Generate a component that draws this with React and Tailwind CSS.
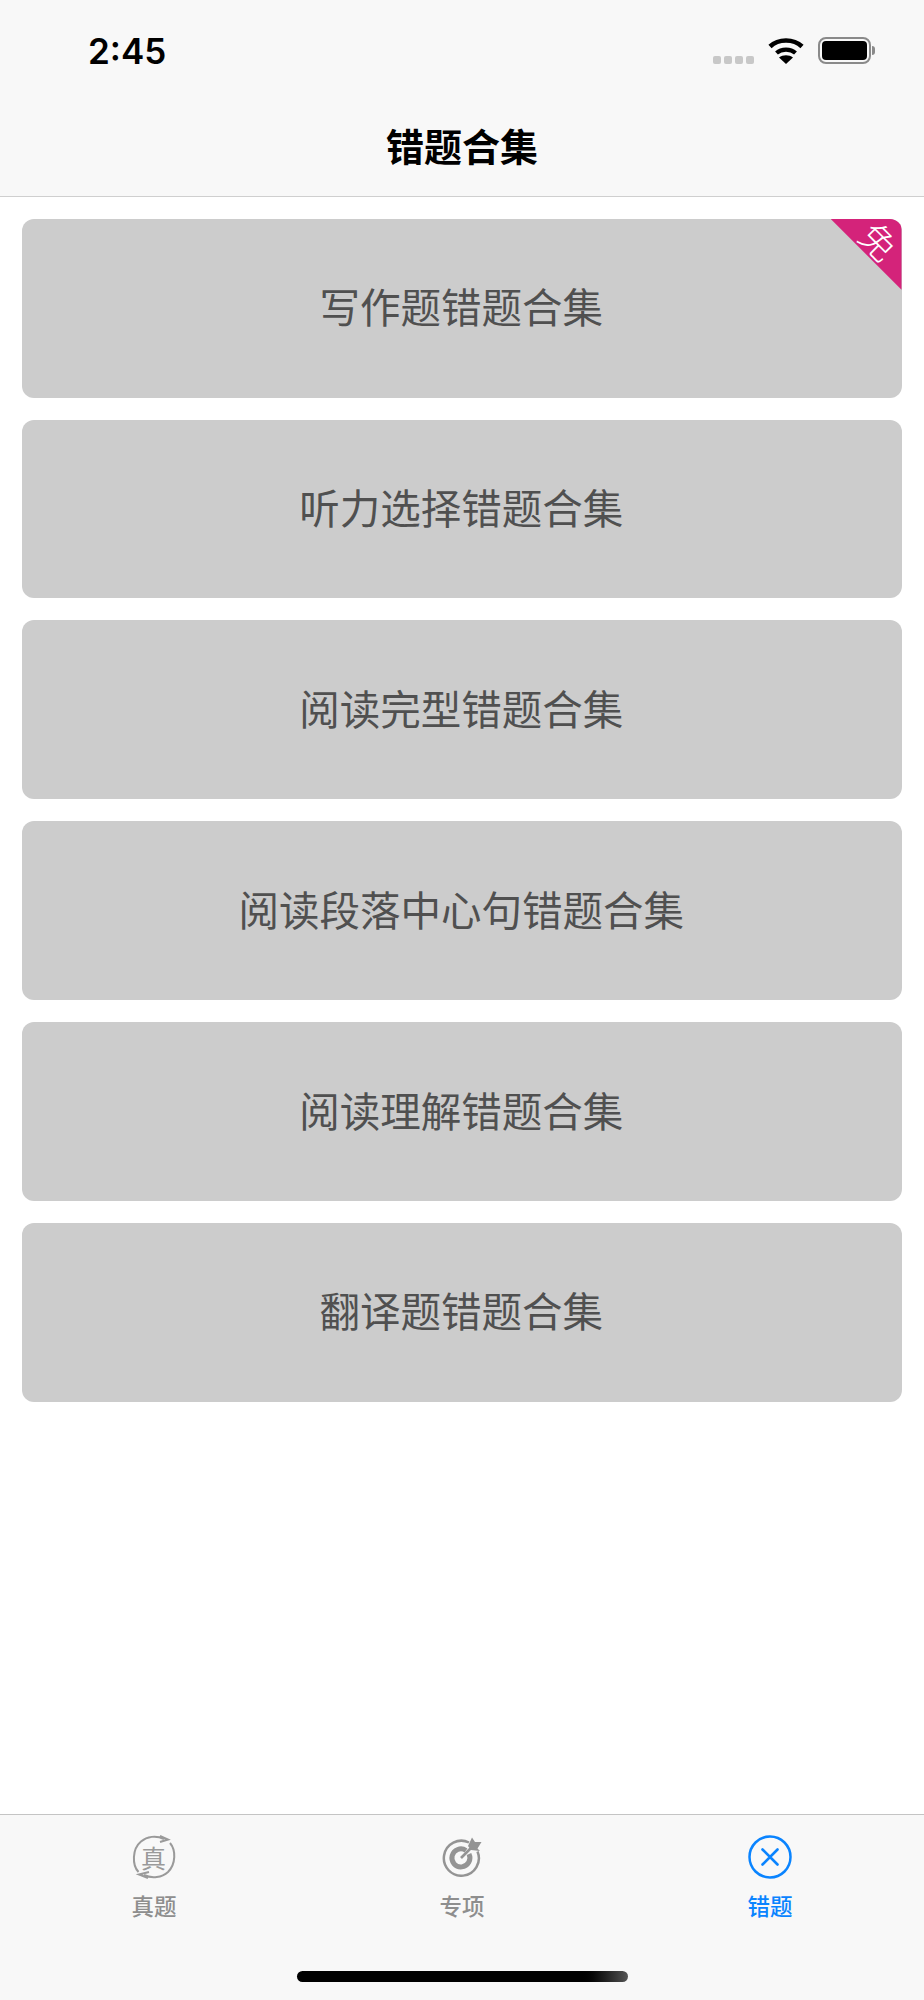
const font = { fontFamily: '"Noto Sans CJK SC", "Liberation Sans", sans-serif' };
const items = ['写作题错题合集', '听力选择错题合集', '阅读完型错题合集', '阅读段落中心句错题合集', '阅读理解错题合集', '翻译题错题合集'];

function Wifi() {
  return (
    <svg width="36" height="27" viewBox="0 0 36 27" fill="none" stroke="#000">
      <path d="M2 9.5C10.5 1.5 25.5 1.5 34 9.5" strokeWidth="4.6" />
      <path d="M8.5 16C13.5 11.5 22.5 11.5 27.5 16" strokeWidth="4.2" />
      <path d="M18 27L11 20.5C15 17.5 21 17.5 25 20.5Z" fill="#000" stroke="none" />
    </svg>
  );
}

function Battery() {
  return (
    <div className="flex items-center">
      <div className="w-[53px] h-[27px] rounded-[8px] border-2 border-[#8a8a8a] p-[2px]">
        <div className="w-full h-full rounded-[4px] bg-black" />
      </div>
      <div className="w-[3px] h-[9px] ml-[1px] rounded-r-full bg-[#8a8a8a]" />
    </div>
  );
}

function ZhenIcon() {
  return (
    <div className="relative w-[44px] h-[44px] flex items-center justify-center">
      <svg className="absolute inset-0" width="44" height="44" viewBox="0 0 44 44" fill="none" stroke="#9a9a9a" strokeWidth="2">
        <path d="M6.5 37C0 30 0 14 9 6.5C15 1.5 24 0 32 4" />
        <path d="M28 1L36 4.5L28 7" />
        <path d="M38 8C44 15 44 29 36 37C30 42.5 20 44 12 40" />
        <path d="M17 37L7 39.5L16 43" />
      </svg>
      <span className="text-[25px] leading-none text-[#9a9a9a] -ml-[1px]">真</span>
    </div>
  );
}

function TargetIcon() {
  return (
    <svg width="40" height="40" viewBox="0 0 40 40" fill="none" stroke="#949494">
      <path d="M27 5.5A17.5 17.5 0 1 0 35.5 14.5" strokeWidth="2.5" />
      <path d="M24 13.5A9 9 0 1 0 27 17" strokeWidth="5" />
      <path d="M19 21L30 10" strokeWidth="2.6" />
      <path d="M26 9L30 0.5L33 5L39.5 5L35.5 11.5L38 14L29 13Z" fill="#949494" stroke="none" />
    </svg>
  );
}

function XIcon() {
  return (
    <svg width="44" height="44" viewBox="0 0 44 44" fill="none" stroke="#0a84ff" strokeLinecap="round">
      <circle cx="22" cy="22" r="20.5" strokeWidth="2.5" />
      <path d="M14.5 14.5L29.5 29.5M29.5 14.5L14.5 29.5" strokeWidth="2.6" />
    </svg>
  );
}

function Tab({ icon, label, active }) {
  return (
    <div className="flex-1 flex flex-col items-center">
      <div className="h-[44px] flex items-center justify-center">{icon}</div>
      <div className={`mt-[10px] text-[22.5px] leading-[33px] font-medium ${active ? 'text-[#0a84ff]' : 'text-[#8e8e8e]'}`}>{label}</div>
    </div>
  );
}

export default function App() {
  return (
    <div style={font} className="w-[924px] h-[2000px] bg-white flex flex-col overflow-hidden">
      <header className="h-[197px] shrink-0 bg-[#f8f8f8] border-b border-[#cfcfcf] flex flex-col">
        <div className="h-[100px] pl-[88px] pr-[49px] pt-[28px] flex justify-between items-start">
          <span style={{ fontFamily: 'Inter, "Liberation Sans", sans-serif' }} className="text-[35px] leading-[46px] font-semibold text-black">2:45</span>
          <div className="flex items-start">
            <div className="flex gap-[3px] mt-[28px] mr-[14px]">
              <div className="w-[8px] h-[8px] rounded-[2px] bg-[#c8c8c8]" />
              <div className="w-[8px] h-[8px] rounded-[2px] bg-[#c8c8c8]" />
              <div className="w-[8px] h-[8px] rounded-[2px] bg-[#c8c8c8]" />
              <div className="w-[8px] h-[8px] rounded-[2px] bg-[#c8c8c8]" />
            </div>
            <div className="mt-[9px] mr-[14px]"><Wifi /></div>
            <div className="mt-[9px]"><Battery /></div>
          </div>
        </div>
        <div className="flex-1 flex items-start justify-center pt-[20px]">
          <h1 className="text-[38px] leading-[50px] font-bold text-black">错题合集</h1>
        </div>
      </header>

      <main className="flex-1 pl-[22px] pr-[22.5px] pt-[21.75px] flex flex-col gap-[22.1px]">
        {items.map((t, i) => (
          <div key={t} className="relative h-[178.75px] rounded-[12px] bg-[#cccccc] flex items-center justify-center">
            <span className="text-[40.5px] leading-[56px] text-[#505050] -mt-[4px] -ml-[1px]">{t}</span>
            {i === 0 && (
              <>
                <div className="absolute inset-0 rounded-[12px] overflow-hidden">
                  <div className="absolute top-0 right-0 w-[71px] h-[71px] bg-[#d4237a] [clip-path:polygon(0_0,100%_0,100%_100%)]" />
                </div>
                <span className="absolute top-[1px] right-[3px] text-[36px] leading-[40px] font-light text-white rotate-45">免</span>
              </>
            )}
          </div>
        ))}
      </main>

      <footer className="h-[186px] shrink-0 bg-[#f8f8f8] border-t border-[#c4c4c4] flex flex-col">
        <div className="flex pt-[20px]">
          <Tab icon={<ZhenIcon />} label="真题" />
          <Tab icon={<TargetIcon />} label="专项" />
          <Tab icon={<XIcon />} label="错题" active />
        </div>
        <div className="mt-auto mb-[18px] mx-auto w-[331px] h-[11px] rounded-full bg-gradient-to-r from-black from-[85%] to-[#555555]" />
      </footer>
    </div>
  );
}
